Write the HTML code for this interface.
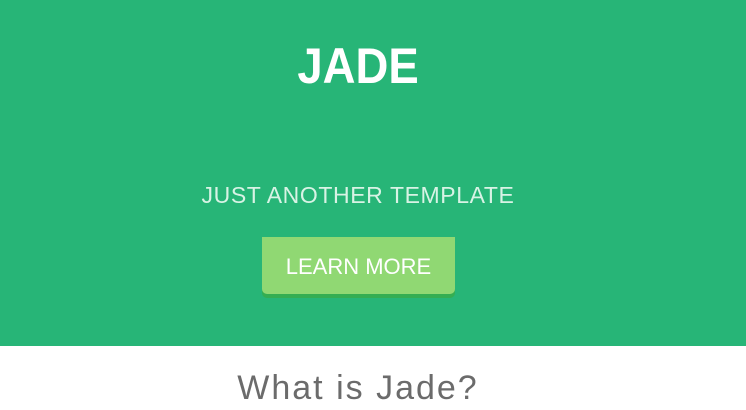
<!DOCTYPE html>
<html><head><style>
html,body{margin:0;padding:0;width:746px;height:401px;overflow:hidden;background:#fff;font-family:"Liberation Sans",sans-serif;}
.hero{position:absolute;left:0;top:0;width:746px;height:346px;background:#27b577;}
.t{position:absolute;white-space:nowrap;}
h1{position:absolute;left:0;width:716px;text-align:center;top:36px;margin:0;font-size:50px;font-weight:bold;color:#fff;line-height:60px;transform:scaleX(0.91);transform-origin:358px 0;}
.sub{left:0;width:716px;text-align:center;top:181px;font-size:23px;color:#d8f3e5;letter-spacing:0.6px;line-height:28px;}
.btn{position:absolute;left:262px;top:237px;width:193px;height:57px;background:#90d873;border-radius:0 0 5px 5px;box-shadow:0 4px 0 #34ae52;color:#fff;font-size:22px;text-align:center;line-height:60px;}
.w{left:0;width:716px;text-align:center;top:366px;font-size:34px;color:#6b6b6b;letter-spacing:2px;line-height:44px;}
</style></head><body>
<div class="hero"></div>
<h1>JADE</h1>
<div class="t sub">JUST ANOTHER TEMPLATE</div>
<div class="btn">LEARN MORE</div>
<div class="t w">What is Jade?</div>
</body></html>
